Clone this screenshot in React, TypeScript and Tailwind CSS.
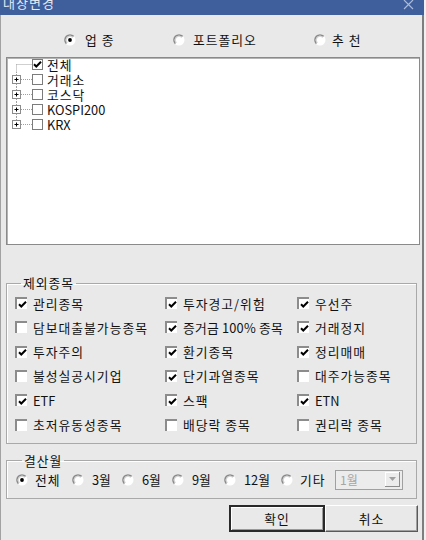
import React from 'react';

function Radio({ checked }: { checked?: boolean }) {
  return (
    <svg width="12" height="12" viewBox="0 0 12 12" className="shrink-0">
      <circle cx="6" cy="6" r="5.5" fill="#ffffff" />
      <path d="M2.4 9.6 A5 5 0 0 1 9.6 2.4" stroke="#8a8a8a" strokeWidth="1.5" fill="none" />
      <path d="M3.3 8.7 A3.8 3.8 0 0 1 8.7 3.3" stroke="#c8c8c8" strokeWidth="1" fill="none" />
      {checked && <circle cx="6" cy="6" r="1.9" fill="#000000" />}
    </svg>
  );
}

function CheckMark() {
  return (
    <svg width="9" height="9" viewBox="0 0 9 9">
      <path d="M1 4.2 L3.3 6.5 L8 1.8" stroke="#000000" strokeWidth="2" fill="none" />
    </svg>
  );
}

function Check({ checked }: { checked?: boolean }) {
  return (
    <span className="flex h-[12px] w-[12px] shrink-0 items-center justify-center border-l-2 border-t-2 border-l-[#8c8c8c] border-t-[#8c8c8c] bg-white">
      {checked && <CheckMark />}
    </span>
  );
}

function TreeCheck({ checked }: { checked?: boolean }) {
  return (
    <span className="flex h-[11px] w-[11px] shrink-0 items-center justify-center border border-[#7c7c7c] bg-white">
      {checked && <CheckMark />}
    </span>
  );
}

function TreeGutter({ kind }: { kind: 'root' | 'mid' | 'last' }) {
  return (
    <svg width="24" height="15" viewBox="0 0 24 15" className="shrink-0">
      {kind === 'root' && (
        <>
          <line x1="8.5" y1="7.5" x2="24" y2="7.5" stroke="#a0a0a0" strokeDasharray="1 1" />
          <line x1="8.5" y1="7.5" x2="8.5" y2="15" stroke="#a0a0a0" strokeDasharray="1 1" />
        </>
      )}
      {kind !== 'root' && (
        <>
          <line x1="8.5" y1="0" x2="8.5" y2={kind === 'last' ? 7.5 : 15} stroke="#a0a0a0" strokeDasharray="1 1" />
          <line x1="13" y1="7.5" x2="24" y2="7.5" stroke="#a0a0a0" strokeDasharray="1 1" />
          <rect x="4.5" y="3.5" width="8" height="8" fill="#ffffff" stroke="#8c8c8c" />
          <line x1="6.5" y1="7.5" x2="10.5" y2="7.5" stroke="#000000" />
          <line x1="8.5" y1="5.5" x2="8.5" y2="9.5" stroke="#000000" />
        </>
      )}
    </svg>
  );
}

const treeRows: { label: string; kind: 'root' | 'mid' | 'last'; checked?: boolean; latin?: boolean }[] = [
  { label: '전체', kind: 'root', checked: true },
  { label: '거래소', kind: 'mid' },
  { label: '코스닥', kind: 'mid' },
  { label: 'KOSPI200', kind: 'mid', latin: true },
  { label: 'KRX', kind: 'last', latin: true },
];

const excludes: [string, boolean][] = [
  ['관리종목', true],
  ['투자경고/위험', true],
  ['우선주', true],
  ['담보대출불가능종목', false],
  ['증거금 100% 종목', true],
  ['거래정지', true],
  ['투자주의', true],
  ['환기종목', true],
  ['정리매매', true],
  ['불성실공시기업', false],
  ['단기과열종목', true],
  ['대주가능종목', false],
  ['ETF', true],
  ['스팩', true],
  ['ETN', true],
  ['초저유동성종목', false],
  ['배당락 종목', false],
  ['권리락 종목', false],
];

const isLatin = (s: string) => /^[A-Za-z0-9 ]+$/.test(s);
const hasDigit = (s: string) => /[0-9]/.test(s);

export default function App() {
  return (
    <div className="h-[540px] w-[426px] overflow-hidden bg-[#f0f0f0] text-[12.8px] tracking-[1px] text-[#111] font-['Noto_Sans_CJK_KR','Liberation_Sans',sans-serif]">
      <div className="flex h-[15px] w-[424px] items-start justify-between overflow-hidden bg-[#3f5e9c]">
        <span className="-mt-[5px] ml-[3px] text-[13px] leading-[16px] text-[#e4eaf4]">대상변경</span>
        <svg width="11" height="11" viewBox="0 0 11 11" className="mr-[10px] mt-[0px]">
          <path d="M1 0 L10 9 M10 0 L1 9" stroke="#a9badb" strokeWidth="1.2" />
        </svg>
      </div>

      <div className="flex h-[525px] w-[424px] flex-col border-l border-r-2 border-l-[#a2a2a2] border-r-[#7e7e7e] bg-[#e9e9e9]">
        {/* 상단 라디오 */}
        <div className="mt-[15px] flex h-[20px] items-center pl-[63px]">
          <label className="flex w-[109px] items-center gap-[9px]">
            <Radio checked />
            <span>업 종</span>
          </label>
          <label className="flex w-[141px] items-center gap-[8px]">
            <Radio />
            <span>포트폴리오</span>
          </label>
          <label className="flex items-center gap-[6px]">
            <Radio />
            <span>추 천</span>
          </label>
        </div>

        {/* 트리 */}
        <div className="ml-[5px] mt-[7px] h-[188px] w-[414px] border border-[#8a8a8a] bg-white shadow-[inset_1px_1px_0_#b4b4b4]">
          <div className="-mt-[1px] pl-[1px]">
            {treeRows.map((r) => (
              <div key={r.label} className="flex h-[15px] items-center leading-[15px]">
                <TreeGutter kind={r.kind} />
                <TreeCheck checked={r.checked} />
                <span className={r.latin ? 'ml-[4px] tracking-normal' : 'ml-[4px]'}>{r.label}</span>
              </div>
            ))}
          </div>
        </div>

        {/* 제외종목 */}
        <fieldset className="ml-[5px] mt-[30px] w-[411px] border border-[#a9a9a9] pb-[6px] pl-[8px] shadow-[inset_1px_1px_0_#ffffff]">
          <legend className="ml-[6px] px-[2px] leading-[16px]">제외종목</legend>
          <div className="grid grid-cols-[150px_132px_1fr]">
            {excludes.map(([label, checked]) => (
              <div key={label} className="flex h-[24.3px] items-center gap-[6px]">
                <Check checked={checked} />
                <span
                  className={
                    isLatin(label) ? 'tracking-normal' : hasDigit(label) ? 'tracking-[0.2px]' : ''
                  }
                >
                  {label}
                </span>
              </div>
            ))}
          </div>
        </fieldset>

        {/* 결산월 */}
        <fieldset className="ml-[5px] mt-[9px] w-[411px] border border-[#a9a9a9] pb-[7px] pl-[9px] shadow-[inset_1px_1px_0_#ffffff]">
          <legend className="ml-[6px] px-[2px] leading-[16px]">결산월</legend>
          <div className="flex h-[22px] items-center">
            <label className="flex w-[56px] items-center gap-[7px]">
              <Radio checked />
              <span>전체</span>
            </label>
            <label className="flex w-[50px] items-center gap-[8px]">
              <Radio />
              <span className="tracking-normal">3월</span>
            </label>
            <label className="flex w-[50px] items-center gap-[8px]">
              <Radio />
              <span className="tracking-normal">6월</span>
            </label>
            <label className="flex w-[52px] items-center gap-[8px]">
              <Radio />
              <span className="tracking-normal">9월</span>
            </label>
            <label className="flex w-[57px] items-center gap-[8px]">
              <Radio />
              <span className="tracking-normal">12월</span>
            </label>
            <label className="flex w-[54px] items-center gap-[7px]">
              <Radio />
              <span>기타</span>
            </label>
            <div className="flex h-[20px] w-[68px] items-center justify-between border border-[#a0a0a0] bg-[#ececec] pl-[4px] pr-[2px]">
              <span className="text-[12px] tracking-normal text-[#a6a6a6]">1월</span>
              <span className="flex h-[15px] w-[15px] items-center justify-center border-b border-r border-b-[#8c8c8c] border-r-[#8c8c8c] bg-[#ececec] shadow-[inset_1px_1px_0_#ffffff]">
                <svg width="7" height="4" viewBox="0 0 7 4">
                  <path d="M0 0 L7 0 L3.5 4 Z" fill="#a0a0a0" />
                </svg>
              </span>
            </div>
          </div>
        </fieldset>

        {/* 버튼 */}
        <div className="ml-[228px] mt-[6px] flex">
          <button className="flex h-[27px] w-[96px] items-center justify-center border-2 border-[#2a2a2a] bg-[#e9e9e9] shadow-[inset_1px_1px_0_#ffffff,inset_-1px_-1px_0_#9a9a9a]">
            확인
          </button>
          <button className="flex h-[27px] w-[93px] items-center justify-center border border-b-[#5a5a5a] border-l-[#ffffff] border-r-[#5a5a5a] border-t-[#ffffff] bg-[#e9e9e9] shadow-[inset_-1px_-1px_0_#a0a0a0]">
            취소
          </button>
        </div>
      </div>
    </div>
  );
}
